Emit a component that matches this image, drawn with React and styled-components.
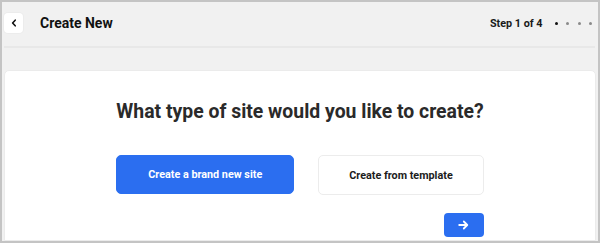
import React from "react";
import styled, { createGlobalStyle } from "styled-components";

const Global = createGlobalStyle`
  html, body { margin: 0; padding: 0; background: #ffffff; }
  body { font-family: Roboto, "Liberation Sans", Arial, sans-serif; }
  * { box-sizing: border-box; }
`;

const Frame = styled.div`
  width: 600px;
  height: 243px;
  border: 2px solid #c4c4c4;
  background: #f1f1f1;
  display: flex;
  flex-direction: column;
  padding: 0 2px;
  overflow: hidden;
`;

const Header = styled.header`
  height: 46px;
  display: flex;
  align-items: center;
  padding: 0 0 2px 0;
  border-bottom: 2px solid #e8e8e8;
  margin-right: 1px;
`;

const BackButton = styled.button`
  width: 19px;
  height: 20px;
  border: none;
  border-radius: 4px;
  background: #ffffff;
  display: flex;
  align-items: center;
  justify-content: center;
  padding: 0;
  box-shadow: 0 0 0 1px #ececec;
`;

const Title = styled.h1`
  margin: 0 0 0 17px;
  font-size: 14px;
  font-weight: 700;
  color: #111;
  flex: 1;
`;

const Step = styled.span`
  font-size: 10.8px;
  font-weight: 700;
  color: #1a1a1a;
  margin-right: 12px;
`;

const Dots = styled.div`
  display: flex;
  gap: 8.5px;
  align-items: center;
  margin-right: 3px;
`;

const Dot = styled.span`
  width: 3px;
  height: 3px;
  border-radius: 50%;
  background: ${(p) => (p.$active ? "#111" : "#8a8a8a")};
`;

const Card = styled.main`
  margin-top: 22px;
  flex: 1;
  background: #ffffff;
  border: 1px solid #ebebeb;
  border-radius: 5px 5px 0 0;
  display: flex;
  flex-direction: column;
  align-items: center;
  padding-top: 28px;
`;

const Heading = styled.h2`
  margin: 0;
  font-size: 19.4px;
  font-weight: 700;
  color: #2a2a2a;
  line-height: 26px;
`;

const Choices = styled.div`
  display: flex;
  flex-direction: column;
  align-items: flex-end;
  margin-top: 30px;
`;

const Row = styled.div`
  display: flex;
  align-items: flex-start;
  gap: 24px;
`;

const Choice = styled.button`
  height: ${(p) => (p.$primary ? "39px" : "40px")};
  padding: 0 ${(p) => (p.$primary ? "31px" : "30px")};
  border-radius: 5px;
  border: 1px solid ${(p) => (p.$primary ? "#2a6ff0" : "#ececec")};
  background: ${(p) => (p.$primary ? "#2b6ef0" : "#ffffff")};
  color: ${(p) => (p.$primary ? "#ffffff" : "#1c1c1c")};
  font-family: inherit;
  font-size: 10.8px;
  font-weight: 700;
  cursor: pointer;
`;

const NextButton = styled.button`
  margin-top: 18px;
  width: 40px;
  height: 24px;
  border: none;
  border-radius: 4px;
  background: #2b6ef0;
  display: flex;
  align-items: center;
  justify-content: center;
  padding: 0;
`;

export default function App() {
  return (
    <>
      <Global />
      <Frame>
        <Header>
          <BackButton aria-label="Back">
            <svg width="6" height="8" viewBox="0 0 6 8">
              <path d="M4.2 1.2 L1.6 4 L4.2 6.8" fill="none" stroke="#111" strokeWidth="1.6" strokeLinecap="round" strokeLinejoin="round" />
            </svg>
          </BackButton>
          <Title>Create New</Title>
          <Step>Step 1 of 4</Step>
          <Dots>
            <Dot $active />
            <Dot />
            <Dot />
            <Dot />
          </Dots>
        </Header>
        <Card>
          <Heading>What type of site would you like to create?</Heading>
          <Choices>
            <Row>
              <Choice $primary>Create a brand new site</Choice>
              <Choice>Create from template</Choice>
            </Row>
            <NextButton aria-label="Next">
              <svg width="11" height="10" viewBox="0 0 11 10">
                <path d="M1.2 5 H9.2 M5.8 1.5 L9.3 5 L5.8 8.5" fill="none" stroke="#fff" strokeWidth="1.8" strokeLinecap="round" strokeLinejoin="round" />
              </svg>
            </NextButton>
          </Choices>
        </Card>
      </Frame>
    </>
  );
}
